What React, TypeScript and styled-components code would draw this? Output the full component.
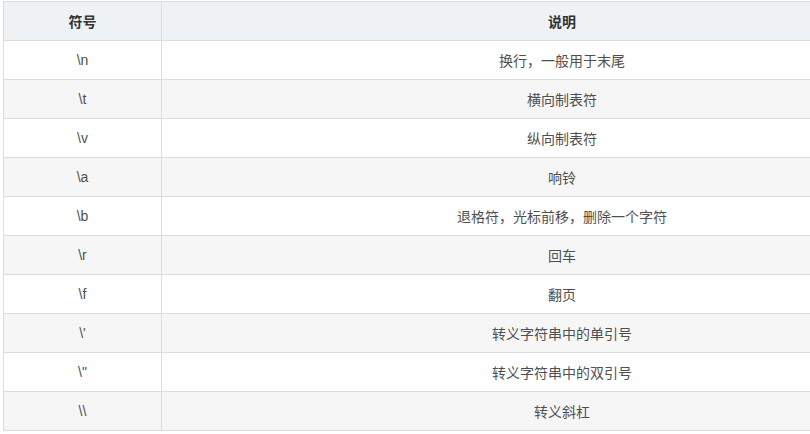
import styled, { createGlobalStyle } from "styled-components";

const GlobalStyle = createGlobalStyle`
    body{
        margin:0;
        background:#fff;
        overflow:hidden;
    }
`;

const Page = styled.div`
    width:810px;
    height:434px;
    overflow:hidden;
    padding:1px 0 0 3px;
    box-sizing:border-box;
`;

const Table = styled.table`
    width:960px;
    border-collapse:collapse;
    table-layout:fixed;
    font-family:"Liberation Sans", "Noto Sans CJK SC", sans-serif;
    font-size:14px;
    color:#4f4f4f;

    th, td{
        border:1px solid #dcdcdc;
        text-align:center;
        padding:0 8px;
        height:38px;
    }

    th{
        background-color:#eff2f5;
        color:#333;
        font-weight:bold;
    }
`;

const Row = styled.tr<{ $striped: boolean }>`
    background-color:${(p) => (p.$striped ? "#f6f6f6" : "#fff")};
`;

const rows: [string, string][] = [
    ["\\n", "换行，一般用于末尾"],
    ["\\t", "横向制表符"],
    ["\\v", "纵向制表符"],
    ["\\a", "响铃"],
    ["\\b", "退格符，光标前移，删除一个字符"],
    ["\\r", "回车"],
    ["\\f", "翻页"],
    ["\\'", "转义字符串中的单引号"],
    ["\\\"", "转义字符串中的双引号"],
    ["\\\\", "转义斜杠"],
];

const App = () => {
    return (
        <Page>
            <GlobalStyle />
            <Table>
                <colgroup>
                    <col style={{ width: 158 }} />
                    <col />
                </colgroup>
                <thead>
                    <tr>
                        <th>符号</th>
                        <th>说明</th>
                    </tr>
                </thead>
                <tbody>
                    {rows.map(([sym, desc], i) => (
                        <Row key={sym} $striped={i % 2 === 1}>
                            <td>{sym}</td>
                            <td>{desc}</td>
                        </Row>
                    ))}
                </tbody>
            </Table>
        </Page>
    );
};

export default App;
